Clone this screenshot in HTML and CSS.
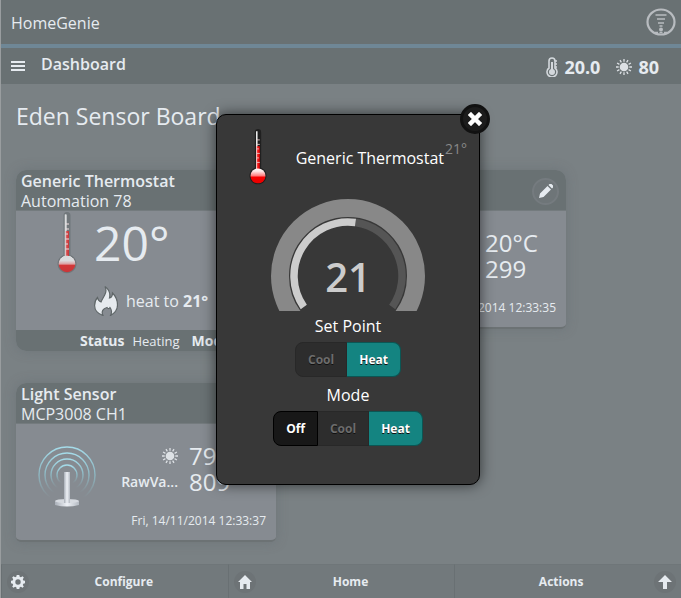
FILE: index.html
```html
<!DOCTYPE html>
<html lang="en">
<head>
<meta charset="utf-8">
<meta name="viewport" content="width=device-width, initial-scale=1">
<title>HomeGenie</title>
<link rel="stylesheet" href="styles.css">
</head>
<body>
<svg class="defs" aria-hidden="true">
  <defs>
    <linearGradient id="fluid" x1="0" x2="1" y1="0" y2="0">
      <stop offset="0" stop-color="#ff5a5a"/><stop offset=".5" stop-color="#f01414"/><stop offset="1" stop-color="#e00000"/>
    </linearGradient>
    <linearGradient id="bulb" x1="0" x2="0" y1="0" y2="1">
      <stop offset="0" stop-color="#ffffff"/><stop offset=".2" stop-color="#ffe4e4"/><stop offset=".5" stop-color="#ff7a7a"/><stop offset=".58" stop-color="#f50000"/><stop offset="1" stop-color="#e80000"/>
    </linearGradient>
    <linearGradient id="wave" x1="0" x2="0" y1="0" y2="1">
      <stop offset="0" stop-color="#a5dcea"/><stop offset=".5" stop-color="#8fc0cc" stop-opacity=".8"/><stop offset=".9" stop-color="#8fb8c0" stop-opacity="0"/>
    </linearGradient>
    <linearGradient id="metal" x1="0" x2="1" y1="0" y2="0">
      <stop offset="0" stop-color="#a9afb8"/><stop offset=".5" stop-color="#eef1f6"/><stop offset="1" stop-color="#b4bac2"/>
    </linearGradient>
    <symbol id="thermo" viewBox="0 0 20 62">
      <path class="tube" d="M10 0a3.500 3.500 0 0 0-3.500 3.500V43a9.500 9.500 0 1 0 7 0V3.500A3.500 3.500 0 0 0 10 0z"/>
      <path d="M7.800 2.500h1.700v42H7.800z" fill="#f0f0f0"/>
      <path d="M8.500 19H12v26H8.500z" fill="url(#fluid)"/>
      <path d="M8.500 12h3.500M8.500 17h3.500M8.500 22h2.500M8.500 27h3.500M8.500 32h2.500M8.500 37h3.500" stroke="#e6c9c9" stroke-width="1"/>
      <circle cx="10" cy="52" r="8.300" fill="url(#bulb)"/>
    </symbol>
    <symbol id="sun" viewBox="0 0 16 16">
      <circle cx="8" cy="8" r="4.300" fill="currentColor"/>
      <g stroke="currentColor" stroke-width="1.300">
        <path id="rays" d="M8 0v2.700M8 13.300V16M0 8h2.700M13.300 8H16"/>
        <use href="#rays" transform="rotate(30 8 8)"/>
        <use href="#rays" transform="rotate(60 8 8)"/>
      </g>
    </symbol>
    <symbol id="pencil" viewBox="0 0 14 14">
      <path d="M0 14l1-4.500 7.500-7.500 3.500 3.500L4.500 13zM9.500 1l1-1a1.500 1.500 0 0 1 2 0L14 1.500a1.500 1.500 0 0 1 0 2l-1 1z" fill="currentColor"/>
    </symbol>
  </defs>
</svg>

<header class="topbar">
  <h1 class="brand">HomeGenie</h1>
  <button class="plain" type="button" aria-label="Activity">
    <svg class="signal" viewBox="0 0 30 28">
      <ellipse cx="15" cy="14" rx="13.500" ry="12.500" fill="none" stroke="#b8bcc0" stroke-width="2.200"/>
      <path d="M9.500 7h11M11 11h8M12 15h6M13.500 18h3" stroke="#b8bcc0" stroke-width="1.700"/>
      <circle cx="15" cy="21.500" r="2" fill="#b8bcc0"/>
      <path d="M9 24.500h12" stroke="#b8bcc0" stroke-width="1.500" stroke-dasharray="3 1.500"/>
    </svg>
  </button>
</header>

<nav class="subbar">
  <button class="plain" type="button" aria-label="Menu">
    <svg class="menu" viewBox="0 0 14 12"><path d="M0 1h14v2H0zM0 5h14v2H0zM0 9h14v2H0z" fill="currentColor"/></svg>
  </button>
  <h2 class="section">Dashboard</h2>
  <div class="reading">
    <svg class="mini-thermo" viewBox="0 0 12 20">
      <path d="M3 4a3 3 0 0 1 6 0v7a5 5 0 1 1-6 0z" fill="none" stroke="currentColor" stroke-width="1.600"/>
      <path d="M6 5v9" stroke="currentColor" stroke-width="2"/>
      <circle cx="6" cy="15" r="3" fill="currentColor"/>
      <path d="M9 4h2M9 7h2M9 10h2" stroke="currentColor" stroke-width="1.300"/>
    </svg>
    <span>20.0</span>
  </div>
  <div class="reading">
    <svg class="sun"><use href="#sun"/></svg>
    <span>80</span>
  </div>
</nav>

<main class="content">
  <h2 class="group">Eden Sensor Board</h2>
  <div class="cards">
    <article class="card">
      <header class="card-head">
        <div><h3>Generic Thermostat</h3><p>Automation 78</p></div>
        <button class="edit" type="button" aria-label="Edit"><svg><use href="#pencil"/></svg></button>
      </header>
      <div class="card-body thermostat">
        <svg class="thermo"><use href="#thermo"/></svg>
        <div class="state">
          <strong class="temp">20°</strong>
          <p class="target">
            <svg class="flame" viewBox="0 0 24 30">
              <path d="M11 .5c5 3.500 5.500 7 4.500 11.500 2-.5 3-2 3-5 3 3 5 8 5 12 0 5-2.500 8-7 10.500 1.500-3 1.500-5.500-.5-8-1 1.500-2 1.500-3 0-4 1-6 4-4 8C4 28 .6 24 .6 19.500c0-3.500 1-6 2.900-8 .5 2.500 1.500 4 3.500 4.500C9 11 14 6.500 11 .5z" fill="#e6eaee" stroke="#5f6668" stroke-width="1.200"/>
            </svg>
            <span>heat to <b>21°</b></span>
          </p>
        </div>
      </div>
      <footer class="card-foot"><b>Status</b><span>Heating</span><b>Mode</b><span>Heat</span></footer>
    </article>

    <article class="card raised">
      <header class="card-head">
        <div><h3>Temperature</h3><p>MCP3008 CH0</p></div>
        <button class="edit" type="button" aria-label="Edit"><svg><use href="#pencil"/></svg></button>
      </header>
      <div class="card-body sensor wide-label">
        <dl class="values">
          <dt>Temp</dt><dd>20°C</dd>
          <dt>RawVa...</dt><dd>299</dd>
        </dl>
        <time>Fri, 14/11/2014 12:33:35</time>
      </div>
    </article>

    <article class="card raised">
      <header class="card-head">
        <div><h3>Light Sensor</h3><p>MCP3008 CH1</p></div>
        <button class="edit" type="button" aria-label="Edit"><svg><use href="#pencil"/></svg></button>
      </header>
      <div class="card-body sensor">
        <svg class="antenna" viewBox="0 0 58 62">
          <g fill="none" stroke="url(#wave)" stroke-width="1.400">
            <circle cx="29" cy="29" r="28"/><circle cx="29" cy="29" r="22"/><circle cx="29" cy="29" r="16"/><circle cx="29" cy="29" r="10"/>
          </g>
          <path d="M17 55h24v4q-12 3-24 0z" fill="url(#metal)"/>
          <ellipse cx="29" cy="55" rx="12" ry="2" fill="#d6dae0"/>
          <path d="M26 26h6v31h-6z" fill="url(#metal)"/>
        </svg>
        <dl class="values">
          <dt><svg class="sun" aria-label="Light"><use href="#sun"/></svg></dt><dd>79</dd>
          <dt>RawVa...</dt><dd>809</dd>
        </dl>
        <time>Fri, 14/11/2014 12:33:37</time>
      </div>
    </article>
  </div>
</main>

<footer class="toolbar">
  <a href="#configure">
    <svg viewBox="0 0 14 14"><path d="M5.700 0h2.600l.4 1.800 1.200.5L11.500 1.300l1.300 1.300-1 1.600.5 1.200 1.700.4v2.500l-1.700.4-.5 1.200 1 1.600-1.300 1.300-1.600-1-1.200.5-.4 1.700H5.700l-.4-1.700-1.200-.5-1.600 1-1.300-1.300 1-1.600-.5-1.200L0 8.300V5.800l1.700-.4.5-1.200-1-1.600 1.300-1.300 1.600 1 1.200-.5zM7 4.300a2.700 2.700 0 1 0 0 5.400 2.700 2.700 0 0 0 0-5.400z" fill="currentColor" fill-rule="evenodd"/></svg>
    <span>Configure</span>
  </a>
  <a href="#home">
    <svg viewBox="0 0 14 14"><path d="M7 0l7 7h-2v7H8.500V9h-3v5H2V7H0z" fill="currentColor"/></svg>
    <span>Home</span>
  </a>
  <a class="end" href="#actions">
    <svg viewBox="0 0 14 14"><path d="M7 0l7 7H9v7H5V7H0z" fill="currentColor"/></svg>
    <span>Actions</span>
  </a>
</footer>

<section class="popup" role="dialog" aria-labelledby="popup-title">
  <button class="close" type="button" aria-label="Close">
    <svg viewBox="0 0 14 14"><path d="M3 3l8 8M11 3l-8 8" stroke="#fff" stroke-width="4.500" stroke-linecap="square"/></svg>
  </button>
  <header class="popup-head">
    <svg class="thermo-small"><use href="#thermo"/></svg>
    <h2 id="popup-title">Generic Thermostat</h2>
    <span class="current">21°</span>
  </header>
  <div class="gauge">
    <svg viewBox="-77 -77 154 112">
      <circle r="68" fill="none" stroke="#888" stroke-width="18"/>
      <path d="M7.500 -53.500A54 54 0 0 1 44.200 31" fill="none" stroke="#555" stroke-width="7.500"/>
      <path d="M-44.200 31A54 54 0 0 1 7.500 -53.500" fill="none" stroke="#ccc" stroke-width="7.500"/>
    </svg>
    <input type="text" value="21" aria-label="Set point temperature">
  </div>
  <h3>Set Point</h3>
  <div class="segmented">
    <button type="button" disabled>Cool</button>
    <button class="on" type="button">Heat</button>
  </div>
  <h3>Mode</h3>
  <div class="segmented">
    <button type="button">Off</button>
    <button type="button" disabled>Cool</button>
    <button class="on" type="button">Heat</button>
  </div>
</section>
</body>
</html>
```
FILE: styles.css
```css
* { box-sizing: border-box; }

body {
  margin: 0;
  min-height: 100vh;
  display: flex;
  flex-direction: column;
  position: relative;
  border-left: 1px solid #999d9f;
  background: #7a8184;
  color: #e6ebf0;
  font: 16px/20px "Open Sans", "Noto Sans", sans-serif;
}

h1, h2, h3, p, dl, dd { margin: 0; }
h1, h2, h3 { font-size: inherit; }
svg { display: block; flex: none; }
.defs { position: absolute; width: 0; height: 0; }

button, input { font: inherit; color: inherit; }
.plain { padding: 0; border: 0; background: none; }

.topbar {
  display: flex;
  align-items: center;
  justify-content: space-between;
  height: 48px;
  padding: 0 5px 0 10px;
  background: #697173;
  border-bottom: 4px solid #6f8796;
}
.brand { padding-top: 2px; font-weight: 400; }
.signal { width: 30px; height: 28px; }

.subbar {
  display: flex;
  align-items: center;
  height: 36px;
  padding: 0 22px 0 10px;
  background: #697173;
}
.menu { width: 14px; height: 12px; }
.section { flex: 1; padding: 0 0 4px 16px; font-weight: 600; }
.reading {
  display: flex;
  align-items: center;
  gap: 6px;
  margin-left: 16px;
  padding-top: 2px;
  font-size: 18px;
  font-weight: 700;
}
.mini-thermo { width: 12px; height: 20px; color: #d3d8dc; }
.sun { width: 16px; height: 16px; color: #dde1e5; }

.content { flex: 1; padding: 16px 15px; }
.group {
  margin-bottom: 38px;
  font-size: 23px;
  line-height: 32px;
  font-weight: 400;
}
.cards {
  display: grid;
  grid-template-columns: repeat(auto-fill, 260px);
  align-items: start;
  gap: 32px 30px;
}

.card {
  border-radius: 10px;
  overflow: hidden;
  background: #868b91;
  box-shadow: 0 0 12px rgba(90, 98, 102, .35);
}
.raised { border-bottom: 2px solid #6c7274; border-radius: 10px 10px 5px 5px; }
.card-head {
  display: flex;
  align-items: center;
  justify-content: space-between;
  height: 41px;
  padding: 2px 7px 0 5px;
  background: #697173;
  border-bottom: 1px solid #747b7e;
}
.card-head h3 { font-weight: 600; }
.edit {
  display: grid;
  place-items: center;
  width: 27px;
  height: 27px;
  padding: 0;
  border: 2px solid #757b7f;
  border-radius: 50%;
  background: #6e7578;
}
.edit svg { width: 14px; height: 14px; }

.tube { fill: var(--tube, #202020); }
.thermostat { display: flex; height: 119px; padding-left: 41px; }
.thermo {
  --tube: #4e5659;
  width: 20px;
  height: 62px;
  margin-top: 1px;
  opacity: .7;
  filter: saturate(.7) brightness(1.3);
}
.state { padding: 7px 0 0 17px; }
.temp { display: block; font-size: 48px; line-height: 50px; font-weight: 400; }
.target { display: flex; align-items: center; gap: 8px; margin-top: 18px; }
.flame { width: 24px; height: 30px; }
.card-foot {
  display: flex;
  align-items: center;
  gap: 8px;
  height: 21px;
  padding-left: 64px;
  background: #697173;
  font-size: 13px;
}
.card-foot b { font-size: 14px; }
.card-foot span { margin-right: 4px; }

.sensor {
  display: grid;
  grid-template-columns: 80px 1fr;
  height: 116px;
  padding: 19px 10px 0 22px;
}
.antenna { width: 58px; height: 62px; margin-top: 3px; }
.values {
  grid-column: 2;
  display: grid;
  grid-template-columns: 60px 1fr;
  align-content: start;
  align-items: center;
  column-gap: 11px;
  font-size: 24px;
  line-height: 26px;
}
.wide-label .values { grid-template-columns: 66px 1fr; }
.values dt { justify-self: end; font-size: 14px; font-weight: 600; }
.sensor time { grid-column: 1 / 3; justify-self: end; align-self: end; padding-bottom: 9px; font-size: 12px; }

.toolbar {
  display: grid;
  grid-template-columns: repeat(3, 1fr);
  height: 34px;
  background: #72797c;
}
.toolbar a {
  display: flex;
  align-items: center;
  padding: 0 9px;
  border-left: 1px solid #697073;
  border-top: 1px solid #6f7679;
  color: inherit;
  font-size: 12px;
  font-weight: 700;
  text-decoration: none;
}
.toolbar span { flex: 1; padding-left: 4px; text-align: center; }
.toolbar .end { flex-direction: row-reverse; }
.toolbar .end span { padding-left: 0; }
.toolbar svg { width: 14px; height: 14px; border-radius: 50%; box-shadow: 0 0 0 4px #6d7376; background: #6d7376; overflow: visible; }

.popup {
  position: absolute;
  top: 114px;
  left: 215px;
  width: 264px;
  padding: 14px 12px 35px;
  border: 1px solid #000;
  border-radius: 10px;
  background: #383838;
  box-shadow: 0 0 14px rgba(0, 0, 0, .6);
  color: #fff;
  text-align: center;
}
.popup h2, .popup h3 { font-weight: 400; }
.popup h3 { line-height: 24px; margin-top: 3px; }
.close {
  position: absolute;
  top: -11px;
  right: -11px;
  display: grid;
  place-items: center;
  width: 30px;
  height: 30px;
  padding: 0;
  border: 3px solid #111;
  border-radius: 50%;
  background: #1c1c1c;
}
.close svg { width: 14px; height: 14px; }
.popup-head { display: flex; height: 70px; padding-left: 20px; }
.thermo-small { width: 18px; height: 56px; }
.popup-head h2 { flex: 1; padding-top: 19px; text-align: right; }
.current { width: 23px; padding-top: 10px; font-size: 14px; color: #888; text-align: right; }
.gauge { display: grid; justify-content: center; }
.gauge svg, .gauge input { grid-area: 1 / 1; }
.gauge svg { width: 154px; height: 112px; }
.gauge input {
  place-self: center;
  width: 80px;
  height: 50px;
  margin-top: 42px;
  padding: 0;
  border: 0;
  background: none;
  color: #ccc;
  font-size: 40px;
  font-weight: 600;
  text-align: center;
}
.segmented { display: inline-flex; margin: 4px 0 3px; vertical-align: top; }
.segmented button {
  height: 35px;
  padding: 0 12px;
  border: 1px solid #000;
  border-left-width: 0;
  background: #181818;
  font-size: 12px;
  font-weight: 700;
  text-shadow: 0 1px 0 #111;
}
.segmented button:first-child { border-left-width: 1px; border-radius: 8px 0 0 8px; }
.segmented button:last-child { border-radius: 0 8px 8px 0; }
.segmented button:disabled { border-color: #282828; background: #2d2d2d; color: #6c6c6c; }
.segmented .on { border-color: #0b5654; background: #148481; }
```
